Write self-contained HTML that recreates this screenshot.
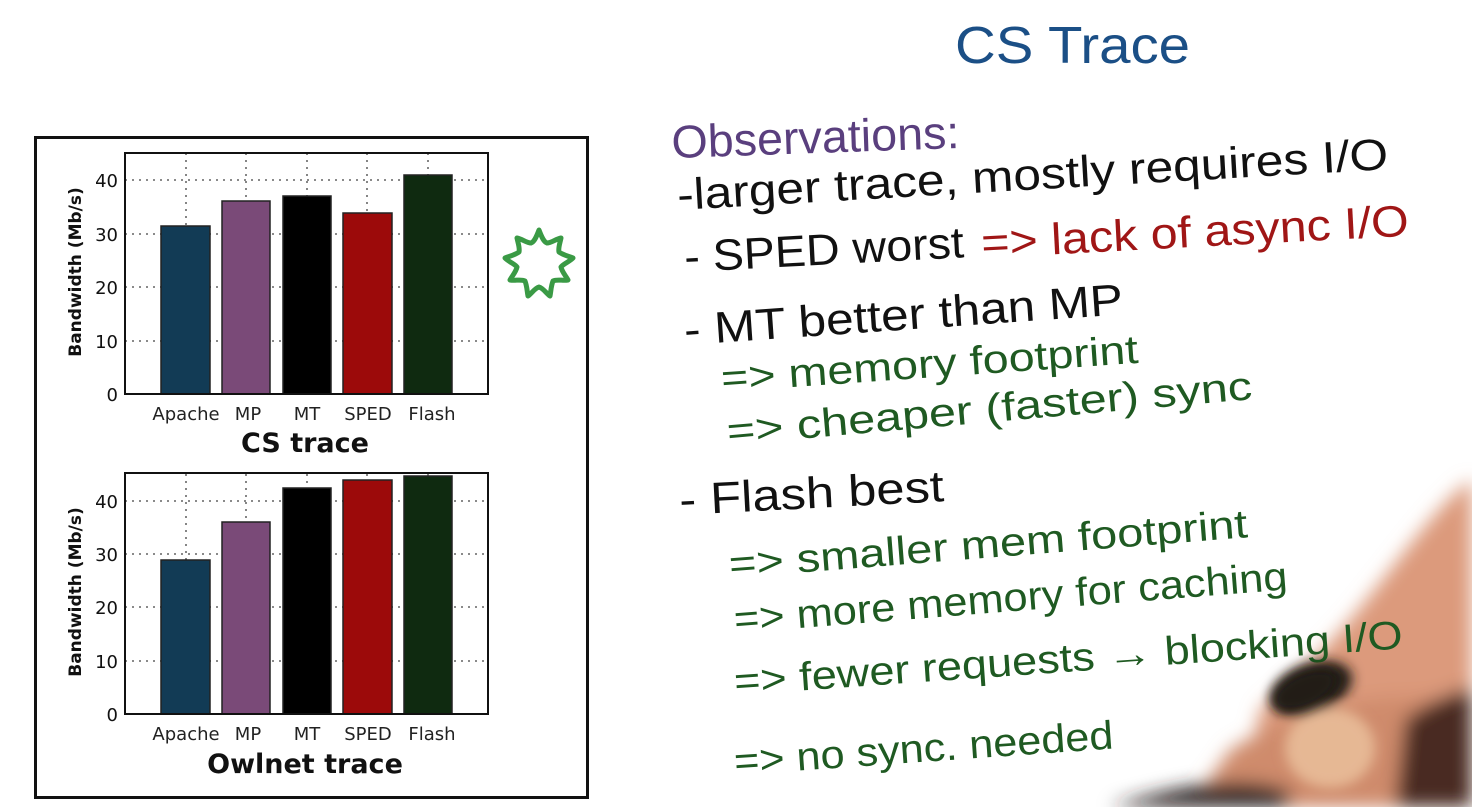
<!DOCTYPE html>
<html><head><meta charset="utf-8"><style>
html,body{margin:0;padding:0;background:#fff;width:1472px;height:807px;overflow:hidden}
svg{display:block}
.h{font-family:"Liberation Sans",sans-serif;font-weight:normal}
.c{font-family:"DejaVu Sans","Liberation Sans",sans-serif}
</style></head><body>
<svg width="1472" height="807" viewBox="0 0 1472 807" xmlns="http://www.w3.org/2000/svg">
<defs>
<filter id="bl" x="-20%" y="-20%" width="140%" height="140%"><feGaussianBlur stdDeviation="9"/></filter>
<filter id="bl2"><feGaussianBlur stdDeviation="6"/></filter>
</defs>
<rect width="1472" height="807" fill="#fff"/>
<!-- hand (behind writing) -->
<g filter="url(#bl)">
<path d="M1472,480 C1440,500 1400,560 1350,620 C1310,665 1280,690 1260,710 L1240,807 L1472,807 Z" fill="#dc9a7c"/>
<path d="M1230,750 C1300,705 1380,690 1472,700 L1472,807 L1190,807 Z" fill="#cf8b6c"/>
<path d="M1405,720 C1430,700 1460,690 1472,688 L1472,807 L1395,807 Z" fill="#4a2a20"/>
<path d="M1110,807 C1190,782 1250,775 1290,792 L1290,807 Z" fill="#2a2420"/>
</g>
<g filter="url(#bl2)">
<ellipse cx="1312" cy="688" rx="42" ry="24" fill="#231c18" transform="rotate(-20 1312 688)"/>
<ellipse cx="1330" cy="748" rx="45" ry="40" fill="#e6b894"/>
</g>

<!-- chart frame -->
<rect x="35.5" y="137.5" width="552" height="660" fill="#fff" stroke="#111" stroke-width="3"/>

<!-- top plot -->
<g class="c">
<g stroke="#444" stroke-width="1.3" stroke-dasharray="2,5">
<line x1="125" y1="180" x2="488" y2="180"/><line x1="125" y1="234" x2="488" y2="234"/>
<line x1="125" y1="287" x2="488" y2="287"/><line x1="125" y1="341" x2="488" y2="341"/>
<line x1="186" y1="153" x2="186" y2="394"/><line x1="246" y1="153" x2="246" y2="394"/>
<line x1="307" y1="153" x2="307" y2="394"/><line x1="367" y1="153" x2="367" y2="394"/><line x1="428" y1="153" x2="428" y2="394"/>
</g>
<g stroke="#222" stroke-width="1.5">
<rect x="161" y="226" width="49" height="168" fill="#123b55"/>
<rect x="222" y="201" width="48" height="193" fill="#7a4a78"/>
<rect x="283" y="196" width="48" height="198" fill="#000"/>
<rect x="343" y="213" width="49" height="181" fill="#9c0a0a"/>
<rect x="404" y="175" width="48" height="219" fill="#0f2a10"/>
</g>
<rect x="125" y="153" width="363" height="241" fill="none" stroke="#111" stroke-width="2"/>
<g font-size="18" fill="#111" text-anchor="end">
<text x="118" y="187">40</text><text x="118" y="241">30</text><text x="118" y="294">20</text><text x="118" y="348">10</text><text x="118" y="401">0</text>
</g>
<text transform="translate(81,272) rotate(-90)" text-anchor="middle" font-size="17" font-weight="bold" fill="#111">Bandwidth (Mb/s)</text>
<g font-size="18" fill="#222" text-anchor="middle">
<text x="186" y="420">Apache</text><text x="248" y="420">MP</text><text x="307" y="420">MT</text><text x="368" y="420">SPED</text><text x="432" y="420">Flash</text>
</g>
<text x="305" y="452" text-anchor="middle" font-size="27" font-weight="bold" fill="#111">CS trace</text>
</g>

<!-- bottom plot -->
<g class="c">
<g stroke="#444" stroke-width="1.3" stroke-dasharray="2,5">
<line x1="125" y1="501" x2="488" y2="501"/><line x1="125" y1="554" x2="488" y2="554"/>
<line x1="125" y1="607" x2="488" y2="607"/><line x1="125" y1="661" x2="488" y2="661"/>
<line x1="186" y1="474" x2="186" y2="714"/><line x1="246" y1="474" x2="246" y2="714"/>
<line x1="307" y1="474" x2="307" y2="714"/><line x1="367" y1="474" x2="367" y2="714"/><line x1="428" y1="474" x2="428" y2="714"/>
</g>
<g stroke="#222" stroke-width="1.5">
<rect x="161" y="560" width="49" height="154" fill="#123b55"/>
<rect x="222" y="522" width="48" height="192" fill="#7a4a78"/>
<rect x="283" y="488" width="48" height="226" fill="#000"/>
<rect x="343" y="480" width="49" height="234" fill="#9c0a0a"/>
<rect x="404" y="476" width="48" height="238" fill="#0f2a10"/>
</g>
<rect x="125" y="473" width="363" height="241" fill="none" stroke="#111" stroke-width="2"/>
<g font-size="18" fill="#111" text-anchor="end">
<text x="118" y="508">40</text><text x="118" y="561">30</text><text x="118" y="614">20</text><text x="118" y="668">10</text><text x="118" y="721">0</text>
</g>
<text transform="translate(81,592) rotate(-90)" text-anchor="middle" font-size="17" font-weight="bold" fill="#111">Bandwidth (Mb/s)</text>
<g font-size="18" fill="#222" text-anchor="middle">
<text x="186" y="740">Apache</text><text x="248" y="740">MP</text><text x="307" y="740">MT</text><text x="368" y="740">SPED</text><text x="432" y="740">Flash</text>
</g>
<text x="305" y="773" text-anchor="middle" font-size="27" font-weight="bold" fill="#111">Owlnet trace</text>
</g>

<!-- green star -->
<path d="M539,230 C542,238 544,242 547,243 C551,243 556,239 561,238 C560,243 558,248 559,252 C563,255 568,256 573,258 C569,262 563,264 561,267 C562,272 566,276 568,280 C563,281 557,279 553,281 C551,286 551,291 550,296 C546,293 543,288 539,287 C535,288 532,293 528,296 C527,291 527,286 525,281 C521,279 515,281 510,280 C512,276 516,272 517,267 C515,264 509,262 505,258 C510,256 515,255 519,252 C520,248 518,243 517,238 C522,239 527,243 531,243 C534,242 536,238 539,230 Z" fill="none" stroke="#3a9a45" stroke-width="5" stroke-linejoin="round"/>

<!-- handwriting -->
<g class="h">
<text x="955" y="63" font-size="52" fill="#1b4f86" textLength="235" lengthAdjust="spacingAndGlyphs">CS Trace</text>
<text x="672" y="158" font-size="46" fill="#5a3f7e" textLength="288" lengthAdjust="spacingAndGlyphs" transform="rotate(-2 672 158)">Observations:</text>
<text x="678" y="210" font-size="44" fill="#111" textLength="712" lengthAdjust="spacingAndGlyphs" transform="rotate(-3.3 678 210)">-larger trace, mostly requires I/O</text>
<text x="685" y="272" font-size="44" fill="#111" textLength="280" lengthAdjust="spacingAndGlyphs" transform="rotate(-3 685 272)">- SPED worst</text>
<text x="982" y="258" font-size="44" fill="#a01616" textLength="428" lengthAdjust="spacingAndGlyphs" transform="rotate(-3 982 258)">=&gt; lack of async I/O</text>
<text x="685" y="345" font-size="44" fill="#111" textLength="440" lengthAdjust="spacingAndGlyphs" transform="rotate(-4 685 345)">- MT better than MP</text>
<text x="722" y="392" font-size="40" fill="#1f5a22" textLength="418" lengthAdjust="spacingAndGlyphs" transform="rotate(-4 722 392)">=&gt; memory footprint</text>
<text x="728" y="445" font-size="40" fill="#1f5a22" textLength="527" lengthAdjust="spacingAndGlyphs" transform="rotate(-5 728 445)">=&gt; cheaper (faster) sync</text>
<text x="680" y="515" font-size="44" fill="#111" textLength="265" lengthAdjust="spacingAndGlyphs" transform="rotate(-3 680 515)">- Flash best</text>
<text x="730" y="578" font-size="40" fill="#1f5a22" textLength="520" lengthAdjust="spacingAndGlyphs" transform="rotate(-4.5 730 578)">=&gt; smaller mem footprint</text>
<text x="735" y="633" font-size="40" fill="#1f5a22" textLength="555" lengthAdjust="spacingAndGlyphs" transform="rotate(-4.5 735 633)">=&gt; more memory for caching</text>
<text x="735" y="695" font-size="40" fill="#1f5a22" textLength="670" lengthAdjust="spacingAndGlyphs" transform="rotate(-4 735 695)">=&gt; fewer requests → blocking I/O</text>
<text x="735" y="775" font-size="40" fill="#1f5a22" textLength="380" lengthAdjust="spacingAndGlyphs" transform="rotate(-4 735 775)">=&gt; no sync. needed</text>
</g>
<!-- pen tip over text -->
<g filter="url(#bl2)">
<ellipse cx="1305" cy="690" rx="35" ry="18" fill="#231c18" transform="rotate(-25 1305 690)"/>
</g>
</svg>
</body></html>
